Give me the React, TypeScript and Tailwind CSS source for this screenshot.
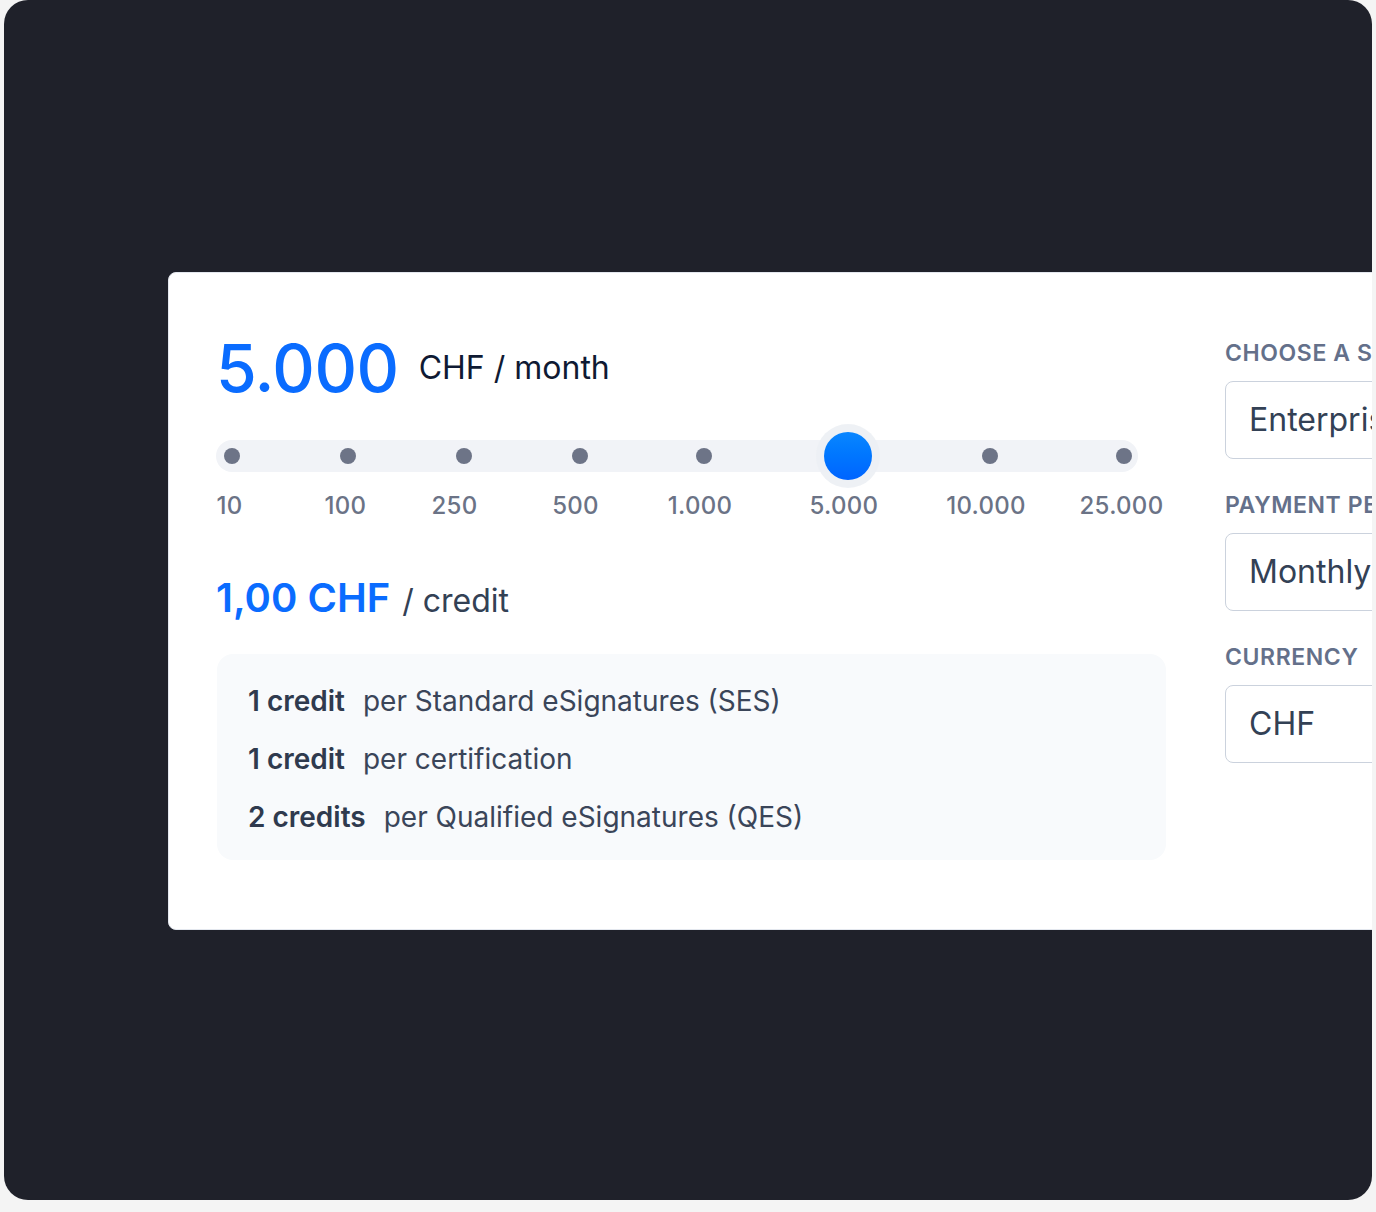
const STEPS = [
  { label: "10", dot: 16, text: 13.5 },
  { label: "100", dot: 132, text: 129.5 },
  { label: "250", dot: 248, text: 238.5 },
  { label: "500", dot: 364, text: 359.5 },
  { label: "1.000", dot: 488, text: 484 },
  { label: "5.000", dot: 632, text: 628 },
  { label: "10.000", dot: 774, text: 770 },
  { label: "25.000", dot: 908, text: 905.5 },
];
const ACTIVE = 5;

const CREDITS = [
  { amount: "1 credit", what: "per Standard eSignatures (SES)" },
  { amount: "1 credit", what: "per certification" },
  { amount: "2 credits", what: "per Qualified eSignatures (QES)" },
];

const FIELDS = [
  { label: "Choose a subscription", value: "Enterprise" },
  { label: "Payment period", value: "Monthly" },
  { label: "Currency", value: "CHF" },
];

function Slider() {
  return (
    <div className="mt-[39px]">
      <div className="relative h-[32px] w-[922px] rounded-full bg-[#f1f3f7]">
        {STEPS.map((s, i) =>
          i === ACTIVE ? (
            <span
              key={s.label}
              className="absolute top-1/2 h-[48px] w-[48px] -translate-x-1/2 -translate-y-1/2 rounded-full bg-gradient-to-b from-[#0a86ff] to-[#0064ff] shadow-[0_0_0_8px_rgba(236,239,244,0.9)]"
              style={{ left: s.dot }}
            />
          ) : (
            <span
              key={s.label}
              className="absolute top-1/2 h-[16px] w-[16px] -translate-x-1/2 -translate-y-1/2 rounded-full bg-[#6d7487]"
              style={{ left: s.dot }}
            />
          )
        )}
      </div>
      <div className="relative mt-[19px] h-[30px] w-[922px]">
        {STEPS.map((s) => (
          <span
            key={s.label}
            className="absolute top-0 -translate-x-1/2 whitespace-nowrap text-[24px] leading-[30px] font-medium tracking-[0.3px] text-[#6b7386]"
            style={{ left: s.text }}
          >
            {s.label}
          </span>
        ))}
      </div>
    </div>
  );
}

export default function App() {
  return (
    <div
      className="h-[1212px] w-full overflow-hidden bg-[#f4f4f4]"
      style={{ fontFamily: "Inter, 'Noto Sans', sans-serif" }}
    >
      <div className="ml-[4px] h-[1200px] w-[1368px] overflow-hidden rounded-[24px] bg-[#1f212a] pl-[164px] pt-[272px]">
        <div className="flex w-[1500px] gap-[59px] rounded-l-[8px] border border-[#e3e7ee] bg-white pb-[69px] pl-[47px] pt-[62px]">
          <div className="w-[950px]">
            <div className="flex items-center gap-[20px]">
              <span className="text-[66px] leading-none font-medium tracking-[-0.5px] text-[#0a6cff]">
                5.000
              </span>
              <span className="text-[32px] leading-none text-[#0f1a33]">
                CHF / month
              </span>
            </div>

            <Slider />

            <div className="mt-[57px] flex items-baseline gap-[12px]">
              <span className="text-[40px] leading-none font-semibold text-[#0a6cff]">
                1,00 CHF
              </span>
              <span className="text-[32px] leading-none text-[#334155]">
                / credit
              </span>
            </div>

            <div className="mt-[36px] ml-[1px] rounded-[16px] bg-[#f8fafc] pb-[14px] pl-[31px] pt-[18px]">
              {CREDITS.map((c, i) => (
                <div
                  key={i}
                  className="text-[28px] leading-[58px] text-[#3a4559]"
                >
                  <span className="mr-[18px] font-semibold text-[#2f3a4e]">
                    {c.amount}
                  </span>
                  {c.what}
                </div>
              ))}
            </div>
          </div>

          <div className="mt-[4px] flex w-[320px] flex-col gap-[32px]">
            {FIELDS.map((f) => (
              <div key={f.label} className="flex flex-col gap-[14px]">
                <span className="whitespace-nowrap text-[23px] leading-[28px] font-semibold uppercase tracking-[0.6px] text-[#64708a]">
                  {f.label}
                </span>
                <div className="flex h-[78px] items-center rounded-[8px] border border-[#cbd2dd] bg-white px-[23px] text-[32px] text-[#334155]">
                  {f.value}
                </div>
              </div>
            ))}
          </div>
        </div>
      </div>
    </div>
  );
}
